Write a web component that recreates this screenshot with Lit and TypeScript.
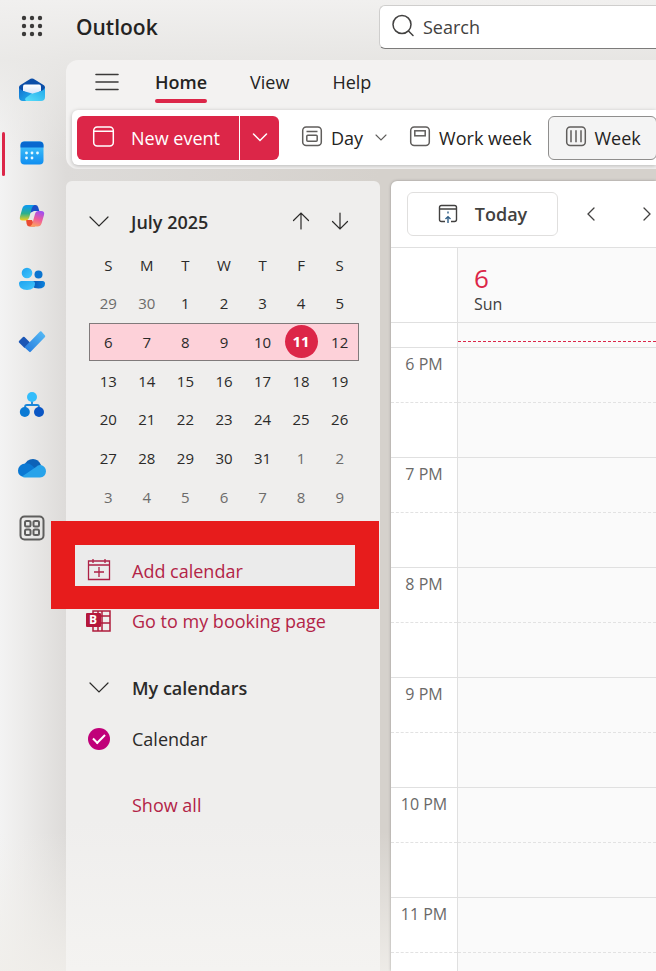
import { LitElement, html, css, svg } from "lit";
import { customElement, state } from "lit/decorators.js";
import { classMap } from "lit/directives/class-map.js";

const chevronDown = html`<svg class="i20" viewBox="0 0 20 20" fill="none" stroke="currentColor" stroke-width="1.2" stroke-linecap="round"><path d="M1 5l9 9 9-9" /></svg>`;

const icons = {
  launcher: html`<svg class="i24" viewBox="0 0 24 24" fill="#3b3a39">
    ${[4, 12, 20].map((y) => [4, 12, 20].map((x) => svg`<circle cx=${x} cy=${y} r="2.2" />`))}
  </svg>`,
  mail: html`<svg class="i28" viewBox="0 0 28 28">
    <defs>
      <linearGradient id="ma" x1="0" y1="0" x2="1" y2="1"><stop offset="0" stop-color="#0f6fcf" /><stop offset="1" stop-color="#22b5f0" /></linearGradient>
      <linearGradient id="mb" x1="0" y1="1" x2="1" y2="0"><stop offset="0" stop-color="#5be0fa" /><stop offset="1" stop-color="#1ea6ea" /></linearGradient>
      <linearGradient id="mc" x1="0" y1="0" x2="0" y2="1"><stop offset="0" stop-color="#fff" /><stop offset="1" stop-color="#cfe0fa" /></linearGradient>
    </defs>
    <path d="M1 11.5Q1 9.8 2.5 9L12.6 2.8Q14 2 15.4 2.8L25.5 9Q27 9.8 27 11.5V16H1z" fill="#0b4ea8" />
    <path d="M5 10.5Q5 8.5 7 8.5H21Q23 8.5 23 10.5V15L14 19 5 15z" fill="url(#mc)" />
    <path d="M1 11.5Q2 14 7 15.5L14 17.500 9 25H5Q1 25 1 21z" fill="url(#ma)" />
    <path d="M27 11.5Q26 14.500 20 16L13 18 7.5 22Q6.5 24 8 25H23Q27 25 27 21z" fill="url(#mb)" />
  </svg>`,
  calendar: html`<svg class="i28" viewBox="0 0 28 28">
    <defs><linearGradient id="ca" x1="0" y1="0" x2="0" y2="1"><stop offset="0" stop-color="#4acbfb" /><stop offset="1" stop-color="#0f8df0" /></linearGradient></defs>
    <rect x="2.5" y="2.5" width="23" height="23" rx="4" fill="url(#ca)" />
    <path d="M2.5 8.5V6.5Q2.5 2.5 6.5 2.5H21.5Q25.5 2.5 25.5 6.5V8.5z" fill="#0868cf" />
    <g fill="#e9faff"><circle cx="8.5" cy="14" r="1.4" /><circle cx="14" cy="14" r="1.4" /><circle cx="19.5" cy="14" r="1.4" /><circle cx="8.5" cy="19" r="1.4" /><circle cx="14" cy="19" r="1.4" /></g>
  </svg>`,
  copilot: html`<svg class="i28" viewBox="0 0 28 28">
    <defs>
      <linearGradient id="pa" x1="0" y1="0" x2="0" y2="1"><stop offset="0.1" stop-color="#0f9be8" /><stop offset="0.55" stop-color="#2db08c" /><stop offset="1" stop-color="#f3cf1b" /></linearGradient>
      <linearGradient id="pb" x1="0.6" y1="0" x2="0.3" y2="1"><stop offset="0" stop-color="#a04ff0" /><stop offset="0.5" stop-color="#ee5c9c" /><stop offset="1" stop-color="#fda35c" /></linearGradient>
    </defs>
    <path d="M13 3H17.500Q19.500 3 20.200 5.300L21.300 9H16L12 11z" fill="#1a4fc8" />
    <path d="M8 18H14L17 24.500H11.500Q9.300 24.500 8.700 22z" fill="#ea4b33" />
    <path d="M8.500 3H16.500Q14.500 3.500 13.700 6.500L11.200 15.500Q10.200 18.500 7.500 18.500H4.500Q1 18.500 2 14.500L4.300 6.500Q5.300 3 8.500 3z" fill="url(#pa)" />
    <path d="M19.500 24.500H11.800Q13.700 24 14.500 21L17 12Q17.800 9 20.500 9H23Q27 9 26 13L23.700 21Q22.700 24.500 19.500 24.500z" fill="url(#pb)" />
  </svg>`,
  people: html`<svg class="i28" viewBox="0 0 28 28">
    <defs>
      <linearGradient id="ea" x1="0" y1="0" x2="1" y2="1"><stop offset="0" stop-color="#1da2ef" /><stop offset="1" stop-color="#45c7fc" /></linearGradient>
      <linearGradient id="eb" x1="0" y1="0" x2="1" y2="0"><stop offset="0" stop-color="#0a55b4" /><stop offset="1" stop-color="#0b82dc" /></linearGradient>
    </defs>
    <circle cx="20.500" cy="9.500" r="4" fill="#0a74cf" />
    <path d="M14 16H24.500Q27 16 27 18.500Q27 23.500 20.500 23.500Q16 23.500 14 21z" fill="url(#eb)" />
    <circle cx="9" cy="8" r="5.300" fill="url(#ea)" />
    <path d="M3.500 16H14.500Q17 16 17 18.500Q17 25 9 25T1 18.500Q1 16 3.500 16z" fill="url(#ea)" />
  </svg>`,
  todo: html`<svg class="i28" viewBox="0 0 28 28">
    <defs><linearGradient id="ta" x1="0" y1="1" x2="1" y2="0"><stop offset="0" stop-color="#2378dc" /><stop offset="1" stop-color="#58bdf6" /></linearGradient></defs>
    <path d="M1 14.500Q0.500 13.800 1 13L5 9Q5.800 8.500 6.500 9L12 14.500 6.500 20z" fill="#1b56b5" />
    <path d="M22 3.500Q22.700 3 23.500 3.500L27 7.500Q27.500 8.200 27 9L12.700 23.800Q12 24.500 11.300 23.800L6.500 19.500z" fill="url(#ta)" />
  </svg>`,
  org: html`<svg class="i28" viewBox="0 0 28 28">
    <path d="M14 9V14M7 19V16Q7 14 9 14H19Q21 14 21 16V19" fill="none" stroke="#1a86d9" stroke-width="1.800" />
    <circle cx="14" cy="6" r="5" fill="#34bdfb" /><circle cx="6.800" cy="21" r="5" fill="#0b7ad4" /><circle cx="21" cy="21" r="5" fill="#0a56c4" />
  </svg>`,
  cloud: html`<svg class="i28" viewBox="0 0 28 28">
    <path d="M6 12Q8.500 5 15 5Q20.500 5 23 11L14 17z" fill="#0c62b8" />
    <path d="M7 9.500Q10.500 8.700 14 11.500L22 19 4 22.500Q0 21 0 16.500Q0.500 10.500 7 9.500z" fill="#0a78d3" />
    <path d="M4 22.500L18 13Q20 10.500 23 11Q28 12.500 28 17.500Q27.500 23 22 23.500H7Q5 23.500 4 22.500z" fill="#28a3ea" />
  </svg>`,
  apps: html`<svg class="i28" viewBox="0 0 28 28" fill="none" stroke="#5f5e5d" stroke-width="2">
    <rect x="2.500" y="2.500" width="23" height="23" rx="4" />
    <rect x="7" y="7" width="5.500" height="5.500" rx="1.500" /><rect x="15.500" y="7" width="5.500" height="5.500" rx="1.500" />
    <rect x="7" y="15.500" width="5.500" height="5.500" rx="1.500" /><rect x="15.500" y="15.500" width="5.500" height="5.500" rx="1.500" />
  </svg>`,
  search: html`<svg class="i24" viewBox="0 0 24 24" fill="none" stroke="#424140" stroke-width="1.500" stroke-linecap="round"><circle cx="11" cy="9.500" r="9" /><path d="M17.500 16l4.500 4.500" /></svg>`,
  menu: html`<svg class="i24" viewBox="0 0 24 24" stroke="#3b3a39" stroke-width="1.600" stroke-linecap="round"><path d="M1 4.500h22M1 12h22M1 19.500h22" /></svg>`,
  newEvent: html`<svg class="i24" viewBox="0 0 24 24" fill="none" stroke="#fff" stroke-width="1.500"><rect x="1.700" y="1" width="19.600" height="19" rx="3.500" /><path d="M2 5.300h19" /></svg>`,
  day: html`<svg class="i24" viewBox="0 -1 24 24" fill="none" stroke="#605e5c" stroke-width="1.500"><rect x="2.700" y="0" width="18.600" height="18.600" rx="3.500" /><path d="M6.500 4.600h11" /><rect x="6.800" y="8.300" width="10.400" height="6" rx="1" /></svg>`,
  workWeek: html`<svg class="i24" viewBox="0 -1 24 24" fill="none" stroke="#605e5c" stroke-width="1.500"><rect x="2.700" y="0" width="18.600" height="18.600" rx="3.500" /><rect x="6.800" y="3.800" width="10.400" height="5" /></svg>`,
  week: html`<svg class="i24" viewBox="0 -1 24 24" fill="none" stroke="#605e5c" stroke-width="1.500"><rect x="2.700" y="0" width="18.600" height="18.600" rx="3.500" /><path d="M7 3.300v12M12 3.300v12M17 3.300v12" /></svg>`,
  smallChevron: html`<svg class="i12" viewBox="0 0 12 12" fill="none" stroke="currentColor" stroke-width="1.100" stroke-linecap="round"><path d="M1 3l5 5 5-5" /></svg>`,
  splitChevron: html`<svg class="i16" viewBox="0 0 16 16" fill="none" stroke="currentColor" stroke-width="1.500" stroke-linecap="round"><path d="M1.500 4l6.500 6.500L14.500 4" /></svg>`,
  today: html`<svg class="i20" viewBox="0 0 20 20" fill="none" stroke="#424140" stroke-width="1.400"><path d="M7 17.500H3.500Q1.500 17.500 1.500 15.500V3.500Q1.500 1.500 3.500 1.500H16.500Q18.500 1.500 18.500 3.500V15.500Q18.500 17.500 16.500 17.500H13M1.500 5h17" /><path d="M10 19v-6M7.500 15L10 12.600 12.500 15M10 7.500v2" stroke="#2f5d86" /></svg>`,
  left: html`<svg class="i16" viewBox="0 0 16 16" fill="none" stroke="#424140" stroke-width="1.300" stroke-linecap="round"><path d="M11 2L5 8l6 6" /></svg>`,
  right: html`<svg class="i16" viewBox="0 0 16 16" fill="none" stroke="#424140" stroke-width="1.300" stroke-linecap="round"><path d="M5 2l6 6-6 6" /></svg>`,
  up: html`<svg class="i20" viewBox="0 0 20 20" fill="none" stroke="currentColor" stroke-width="1.200" stroke-linecap="round"><path d="M10 17V1M2.500 8.500L10 1l7.500 7.500" /></svg>`,
  down: html`<svg class="i20" viewBox="0 0 20 20" fill="none" stroke="currentColor" stroke-width="1.200" stroke-linecap="round"><path d="M10 1v16M2.500 9.500L10 17l7.500-7.500" /></svg>`,
  add: html`<svg class="i24" viewBox="0 0 24 24" fill="none" stroke="#ad2045" stroke-width="1.300"><path d="M1.500 2h21v18.500h-21zM1.500 6h21M6 0v4M18 0v4M12 8v10M7 13h10" /></svg>`,
  bookings: html`<svg class="i24" viewBox="0 0 24 24"><path d="M6 2h17v20H6zM11 2v20M15 2v20M6 7h17M6 14h17" fill="none" stroke="#b01c3c" stroke-width="1.500" /><rect x="-1" y="4" width="15" height="14" rx="1" fill="#b5173b" /><text class="glyph" x="2" y="15" fill="#fff">B</text></svg>`,
};

const railApps = [
  { name: "Mail", icon: icons.mail },
  { name: "Calendar", icon: icons.calendar },
  { name: "Copilot", icon: icons.copilot },
  { name: "People", icon: icons.people },
  { name: "To Do", icon: icons.todo },
  { name: "Org Explorer", icon: icons.org },
  { name: "OneDrive", icon: icons.cloud },
  { name: "More apps", icon: icons.apps },
];

const weeks = [
  [29, 30, 1, 2, 3, 4, 5],
  [6, 7, 8, 9, 10, 11, 12],
  [13, 14, 15, 16, 17, 18, 19],
  [20, 21, 22, 23, 24, 25, 26],
  [27, 28, 29, 30, 31, 1, 2],
  [3, 4, 5, 6, 7, 8, 9],
];

const base = css`
  *, *::before, *::after { box-sizing: border-box; }
  svg { display: block; flex: none; overflow: visible; }
  button { font: inherit; color: inherit; background: none; border: 0; padding: 0; margin: 0; display: flex; align-items: center; justify-content: center; white-space: nowrap; }
  a { color: inherit; text-decoration: none; }
  .i12 { width: 12px; height: 12px; }
  .i16 { width: 16px; height: 16px; }
  .i20 { width: 20px; height: 20px; }
  .i24 { width: 24px; height: 24px; }
  .i28 { width: 28px; height: 28px; }
`;

@customElement("app-rail")
export class AppRail extends LitElement {
  static styles = [base, css`
    :host { display: block; }
    nav { display: flex; flex-direction: column; align-items: center; width: 64px; padding-top: 14px; }
    .launcher { width: 28px; height: 24px; margin-bottom: 20px; }
    .slot { width: 64px; height: 64px; flex: none; position: relative; }
    .slot + .slot { margin-top: -1px; }
    .slot:last-child { height: 58px; }
    .slot.on::before { content: ""; position: absolute; left: 2px; top: 11px; height: 44px; width: 3px; border-radius: 2px; background: #dc2648; }
  `];
  render() {
    return html`<nav aria-label="Apps">
      <button class="launcher" aria-label="App launcher">${icons.launcher}</button>
      ${railApps.map((a) => html`<button class=${classMap({ slot: true, on: a.name === "Calendar" })} aria-label=${a.name}>${a.icon}</button>`)}
    </nav>`;
  }
}

@customElement("app-ribbon")
export class AppRibbon extends LitElement {
  static styles = [base, css`
    :host { display: block; background: #f3f2f1; border-radius: 12px 0 0 12px; padding: 0 0 4px 6px; color: #242322; overflow: hidden; }
    .tabs { display: flex; height: 50px; align-items: stretch; padding-left: 23px; font-size: 18px; }
    .tabs button { padding-bottom: 6px; }
    .menu { margin-right: 36px; }
    .tab { margin-right: 43px; position: relative; }
    .tab.on { font-weight: 600; }
    .tab.on::after { content: ""; position: absolute; left: 0; right: 0; bottom: 7px; height: 4px; border-radius: 2px; background: #dc2648; }
    .tools { display: flex; align-items: center; height: 55px; background: #fff; border-radius: 6px 0 0 6px; padding-left: 5px; box-shadow: 0 1px 4px rgba(0, 0, 0, 0.25); font-size: 18px; }
    .tools button { height: 44px; flex: none; }
    .new { background: #dc2648; color: #fff; width: 162px; border-radius: 6px 0 0 6px; gap: 15px; padding-right: 4px; }
    .more { background: #dc2648; color: #fff; width: 40px; border-radius: 0 6px 6px 0; border-left: 1px solid #fff; margin-right: 21px; }
    .view { gap: 7px; margin-right: 21px; }
    .view .i12 { margin-left: 5px; color: #605e5c; }
    .view.work { margin-right: 16px; }
    .view.on { background: #f4f4f4; border: 1px solid #8f8e8d; border-radius: 6px; width: 109px; margin: 0; }
  `];
  render() {
    return html`
      <div class="tabs">
        <button class="menu" aria-label="Menu">${icons.menu}</button>
        <button class="tab on">Home</button><button class="tab">View</button><button class="tab">Help</button>
      </div>
      <div class="tools">
        <button class="new">${icons.newEvent}<span>New event</span></button>
        <button class="more" aria-label="More new items">${icons.splitChevron}</button>
        <button class="view">${icons.day}<span>Day</span>${icons.smallChevron}</button>
        <button class="view work">${icons.workWeek}<span>Work week</span></button>
        <button class="view on" aria-pressed="true">${icons.week}<span>Week</span></button>
      </div>`;
  }
}

@customElement("side-panel")
export class SidePanel extends LitElement {
  static styles = [base, css`
    :host { display: block; background: linear-gradient(180deg, #efeeed 0, #efeeed 640px, #f4f3f1 100%); border-radius: 6px 6px 0 0; color: #2b2a29; }
    .month { display: flex; align-items: center; height: 65px; padding: 16px 30px 0 23px; font-size: 18px; font-weight: 600; }
    .month span { margin-left: 22px; flex: 1; }
    .month button + button { margin-left: 19px; }
    table { width: 270px; height: 270px; margin-left: 23px; border-collapse: collapse; table-layout: fixed; font-size: 15px; text-align: center; }
    th { font-weight: 400; }
    th, td { padding: 0; height: 38px; }
    .current { background: #fdd1d9; outline: 1px solid #807a7b; outline-offset: -1px; }
    .muted { color: #6c6b6a; }
    .today { display: inline-block; width: 33px; line-height: 33px; border-radius: 50%; background: #dc2648; color: #fff; font-weight: 700; }
    .links { padding-top: 29px; font-size: 18px; }
    .row { display: flex; align-items: center; height: 50px; padding-left: 21px; gap: 21px; color: #b32447; width: 100%; justify-content: flex-start; }
    .frame { position: relative; }
    .frame .row { height: 41px; margin-left: 9px; width: 280px; padding: 10px 0 0 12px; background: #ebebeb; }
    .frame::after { content: ""; position: absolute; left: -15px; top: -24px; width: 328px; height: 88px; border: 24px solid #e71c1c; border-bottom-width: 23px; pointer-events: none; }
    .booking { height: 70px; }
    .group { height: 64px; color: #2b2a29; font-weight: 600; padding-left: 23px; gap: 23px; }
    .item { height: 38px; color: #2b2a29; }
    .all { height: 94px; padding-left: 66px; }
    .check { appearance: none; margin: 0 1px; width: 22px; height: 22px; border-radius: 50%; background: #c00079; display: grid; place-items: center; }
    .check:checked::before { content: ""; width: 12px; height: 7px; border: solid #fff; border-width: 0 0 2px 2px; rotate: -45deg; margin-bottom: 4px; }
    .glyph { font: 700 12px "Open Sans", sans-serif; }
  `];
  render() {
    return html`
      <div class="month">${chevronDown}<span>July 2025</span>
        <button aria-label="Previous month">${icons.up}</button><button aria-label="Next month">${icons.down}</button>
      </div>
      <table aria-label="July 2025">
        <thead><tr>${["S", "M", "T", "W", "T", "F", "S"].map((d) => html`<th>${d}</th>`)}</tr></thead>
        <tbody>${weeks.map((w, r) => html`<tr class=${classMap({ current: r === 1 })}>${w.map((d) => {
          const muted = (r === 0 && d > 7) || (r > 3 && d < 10);
          return html`<td class=${classMap({ muted })}>${r === 1 && d === 11 ? html`<span class="today">${d}</span>` : d}</td>`;
        })}</tr>`)}</tbody>
      </table>
      <div class="links">
        <div class="frame"><button class="row">${icons.add}<span>Add calendar</span></button></div>
        <a class="row booking" href="#booking">${icons.bookings}<span>Go to my booking page</span></a>
        <button class="row group">${chevronDown}<span>My calendars</span></button>
        <label class="row item"><input class="check" type="checkbox" checked /><span>Calendar</span></label>
        <button class="row all">Show all</button>
      </div>`;
  }
}

@customElement("week-view")
export class WeekView extends LitElement {
  @state() hours = ["6 PM", "7 PM", "8 PM", "9 PM", "10 PM", "11 PM"];
  static styles = [base, css`
    :host { display: block; background: #fff; border-radius: 6px 0 0 0; box-shadow: 0 0 3px rgba(0, 0, 0, 0.3); color: #424140; overflow: hidden; }
    .bar { display: flex; align-items: center; height: 66px; padding-left: 16px; }
    .now { width: 151px; height: 44px; border: 1px solid #e0dfde; border-radius: 6px; gap: 17px; font-size: 18px; font-weight: 600; flex: none; }
    .nav { width: 16px; height: 44px; flex: none; margin-left: 25px; }
    .nav + .nav { margin-left: 40px; }
    .line { display: grid; grid-template-columns: 66px 1fr; border-top: 1px solid #e0e0e0; }
    .day { background: #fafafa; border-left: 1px solid #e0e0e0; }
    .head { height: 75px; }
    .head .day { padding: 14px 0 0 16px; font-size: 16px; line-height: 20px; }
    .num { font-size: 26px; line-height: 32px; color: #dc2648; }
    .sliver { height: 25px; }
    .sliver .day { padding-top: 18px; }
    .mark { height: 1px; background: repeating-linear-gradient(90deg, #dc2648 0, #dc2648 3px, #fafafa 3px, #fafafa 5px); }
    .hour { height: 110px; font-size: 16px; }
    .half { height: 55px; border-bottom: 1px dashed #e2e2e2; }
    .time { color: #6a6968; text-align: center; padding-top: 5px; line-height: 22px; white-space: nowrap; }
  `];
  render() {
    return html`
      <div class="bar"><button class="now">${icons.today}<span>Today</span></button>
        <button class="nav" aria-label="Previous week">${icons.left}</button><button class="nav" aria-label="Next week">${icons.right}</button></div>
      <div class="line head"><div></div><div class="day"><div class="num">6</div>Sun</div></div>
      <div class="line sliver"><div></div><div class="day"><div class="mark"></div></div></div>
      ${this.hours.map((h) => html`<div class="line hour"><div><div class="time half">${h}</div></div><div class="day"><div class="half"></div></div></div>`)}`;
  }
}

@customElement("app-root")
export class AppRoot extends LitElement {
  static styles = [base, css`
    :host { display: grid; grid-template-columns: 66px minmax(0, 1fr); height: 100vh; overflow: hidden; font-family: "Open Sans", "Noto Sans", sans-serif;
      background:
        linear-gradient(180deg, #f1f0ef 0, rgba(233, 232, 230, 0.9) 60px, rgba(233, 232, 230, 0) 160px),
        linear-gradient(0deg, rgba(240, 238, 234, 0.9) 0, rgba(240, 238, 234, 0) 140px),
        linear-gradient(90deg, #f3f3f3 0, #ecebea 24px, #dddbd9 66px, #d5d1cc 380px); }
    .main { display: flex; flex-direction: column; min-height: 0; }
    header { display: flex; height: 60px; flex: none; align-items: flex-start; padding-left: 10px; }
    h1 { margin: 0; width: 303px; flex: none; font-size: 21px; line-height: 55px; font-weight: 600; color: #242322; }
    .search { display: flex; align-items: center; gap: 8px; flex: 1; min-width: 0; height: 44px; margin-top: 5px; background: #fff; border: 1px solid #cfcecd; border-right: 0; border-bottom-color: #7c7b7a; border-radius: 6px 0 0 6px; padding-left: 11px; }
    input { font: 18px "Open Sans", "Noto Sans", sans-serif; border: 0; outline: 0; padding: 0; min-width: 0; flex: 1; background: none; }
    input::placeholder { color: #424140; opacity: 1; }
    .body { display: grid; grid-template-columns: 314px minmax(0, 1fr); column-gap: 11px; flex: 1; min-height: 0; padding-top: 12px; }
    side-panel { position: relative; z-index: 1; }
  `];
  render() {
    return html`<app-rail></app-rail>
      <div class="main">
        <header><h1>Outlook</h1><label class="search">${icons.search}<input type="text" placeholder="Search" aria-label="Search" /></label></header>
        <app-ribbon></app-ribbon>
        <div class="body"><side-panel></side-panel><week-view></week-view></div>
      </div>`;
  }
}
